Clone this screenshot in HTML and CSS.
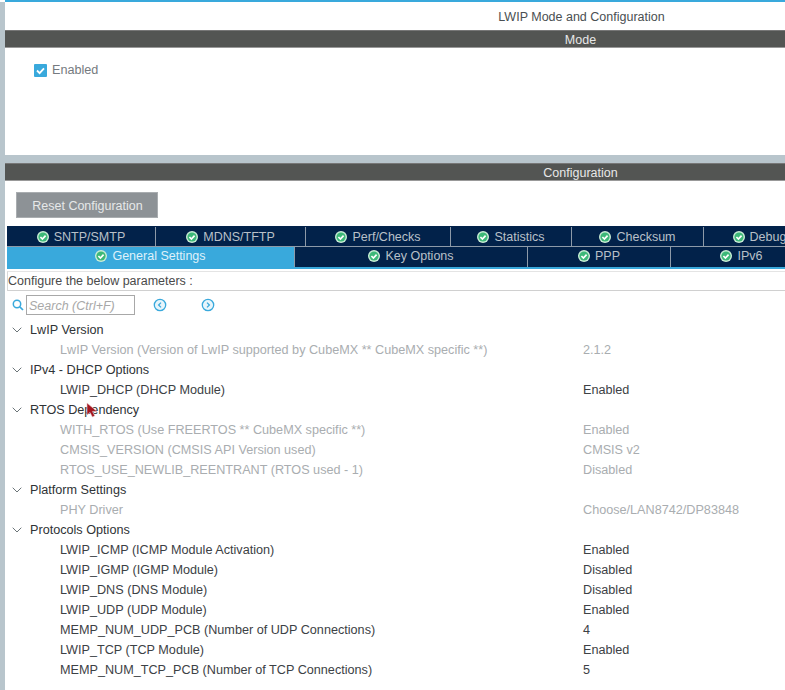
FILE: index.html
```html
<!DOCTYPE html>
<html lang="en">
<head>
<meta charset="utf-8">
<title>LWIP Mode and Configuration</title>
<link rel="stylesheet" href="styles.css">
</head>
<body>
<svg class="defs" width="0" height="0" aria-hidden="true">
  <symbol id="ok" viewBox="0 0 12 12">
    <circle cx="6" cy="6" r="6" fill="#c9ecd6"/>
    <circle cx="6" cy="6" r="4.6" fill="#3cb878"/>
    <path d="M3.4 6l2 2 3.2-3.4" fill="none" stroke="#fff" stroke-width="1.7"/>
  </symbol>
  <symbol id="chev" viewBox="0 0 10 6">
    <path d="M.7.7L5 5 9.3.7" fill="none" stroke="#6b7478" stroke-width="1"/>
  </symbol>
</svg>
<div class="strip"></div>
<main class="main">
  <header class="title">LWIP Mode and Configuration</header>
  <div class="bar">Mode</div>
  <section class="mode">
    <label class="enabled">
      <svg class="check" viewBox="0 0 13 13"><rect width="13" height="13" rx="1" fill="#39a9dc"/><path d="M3 6.5l2.6 2.6L10 4.4" fill="none" stroke="#fff" stroke-width="1.8"/></svg>
      Enabled
    </label>
  </section>
  <div class="gap"></div>
  <div class="bar">Configuration</div>
  <section class="config">
    <button class="reset" type="button">Reset Configuration</button>
    <div class="tabs tabs-top">
      <div class="tab"><svg class="ok"><use href="#ok"/></svg>SNTP/SMTP</div>
      <div class="tab"><svg class="ok"><use href="#ok"/></svg>MDNS/TFTP</div>
      <div class="tab"><svg class="ok"><use href="#ok"/></svg>Perf/Checks</div>
      <div class="tab"><svg class="ok"><use href="#ok"/></svg>Statistics</div>
      <div class="tab"><svg class="ok"><use href="#ok"/></svg>Checksum</div>
      <div class="tab"><svg class="ok"><use href="#ok"/></svg>Debug</div>
    </div>
    <div class="tabs tabs-bottom">
      <div class="tab active"><svg class="ok"><use href="#ok"/></svg>General Settings</div>
      <div class="tab"><svg class="ok"><use href="#ok"/></svg>Key Options</div>
      <div class="tab"><svg class="ok"><use href="#ok"/></svg>PPP</div>
      <div class="tab"><svg class="ok"><use href="#ok"/></svg>IPv6</div>
    </div>
    <div class="configure">Configure the below parameters :</div>
    <div class="search">
      <svg class="glass" viewBox="0 0 12 12"><circle cx="5" cy="5" r="3.7" fill="none" stroke="#39a9dc" stroke-width="1.5"/><path d="M7.8 7.8L11 11" stroke="#39a9dc" stroke-width="1.7"/></svg>
      <div class="search-box">Search (Ctrl+F)</div>
      <svg class="nav nav-prev" viewBox="0 0 14 14"><circle cx="7" cy="7" r="5.7" fill="#e8f5fb" stroke="#39a9dc" stroke-width="1.3"/><path d="M8 4.6L5.6 7 8 9.4" fill="none" stroke="#39a9dc" stroke-width="1.3"/></svg>
      <svg class="nav nav-next" viewBox="0 0 14 14"><circle cx="7" cy="7" r="5.7" fill="#e8f5fb" stroke="#39a9dc" stroke-width="1.3"/><path d="M6 4.6L8.4 7 6 9.4" fill="none" stroke="#39a9dc" stroke-width="1.3"/></svg>
    </div>
    <div class="tree">
      <div class="group"><svg class="chev"><use href="#chev"/></svg>LwIP Version</div>
      <div class="row off"><span>LwIP Version (Version of LwIP supported by CubeMX ** CubeMX specific **)</span><span>2.1.2</span></div>
      <div class="group"><svg class="chev"><use href="#chev"/></svg>IPv4 - DHCP Options</div>
      <div class="row"><span>LWIP_DHCP (DHCP Module)</span><span>Enabled</span></div>
      <div class="group"><svg class="chev"><use href="#chev"/></svg>RTOS Dependency
        <svg class="cursor" viewBox="0 0 12 16"><path d="M1 1v12l3-2.6L6.4 15l2.4-1.2-2.4-4.4H11z" fill="#a4161f" stroke="#e9c9c9" stroke-width=".6"/></svg>
      </div>
      <div class="row off"><span>WITH_RTOS (Use FREERTOS ** CubeMX specific **)</span><span>Enabled</span></div>
      <div class="row off"><span>CMSIS_VERSION (CMSIS API Version used)</span><span>CMSIS v2</span></div>
      <div class="row off"><span>RTOS_USE_NEWLIB_REENTRANT (RTOS used - 1)</span><span>Disabled</span></div>
      <div class="group"><svg class="chev"><use href="#chev"/></svg>Platform Settings</div>
      <div class="row off"><span>PHY Driver</span><span>Choose/LAN8742/DP83848</span></div>
      <div class="group"><svg class="chev"><use href="#chev"/></svg>Protocols Options</div>
      <div class="row"><span>LWIP_ICMP (ICMP Module Activation)</span><span>Enabled</span></div>
      <div class="row"><span>LWIP_IGMP (IGMP Module)</span><span>Disabled</span></div>
      <div class="row"><span>LWIP_DNS (DNS Module)</span><span>Disabled</span></div>
      <div class="row"><span>LWIP_UDP (UDP Module)</span><span>Enabled</span></div>
      <div class="row"><span>MEMP_NUM_UDP_PCB (Number of UDP Connections)</span><span>4</span></div>
      <div class="row"><span>LWIP_TCP (TCP Module)</span><span>Enabled</span></div>
      <div class="row"><span>MEMP_NUM_TCP_PCB (Number of TCP Connections)</span><span>5</span></div>
    </div>
  </section>
</main>
</body>
</html>
```
FILE: styles.css
```css
html, body {
  margin: 0;
  height: 690px;
  overflow: hidden;
}
body {
  display: flex;
  width: 785px;
  background: #fff;
  font: 12.5px/20px "Liberation Sans", Arial, sans-serif;
  color: #3c4145;
}
.defs { position: absolute; }
.strip {
  flex: 0 0 5px;
  background: #b8c5cc;
  margin-top: 2px;
}
.main {
  flex: 0 0 1151px;
  border-top: 2px solid #39a9dc;
}
.title {
  height: 28px;
  line-height: 30px;
  padding-left: 2px;
  text-align: center;
  color: #4a4f52;
}
.bar {
  height: 16px;
  line-height: 18px;
  background: #535553;
  border-top: 1px solid #777;
  border-bottom: 1px solid #999;
  text-align: center;
  color: #e8e8e8;
}
.mode {
  height: 107px;
  box-sizing: border-box;
  padding: 12px 0 0 29px;
  font-size: 12.65px;
}
.enabled {
  display: flex;
  align-items: center;
  gap: 5px;
  color: #757a80;
}
.check { width: 13px; height: 13px; }
.gap { height: 8px; background: #b8c5cc; }
.reset {
  display: block;
  margin: 11px 0 8px 11px;
  width: 142px;
  height: 26px;
  padding: 2px 0 0 1px;
  border: 1px solid #a9adb0;
  background: #8d9296;
  color: #e6e8e9;
  font: inherit;
}
.tabs {
  display: grid;
  margin-left: 2px;
  background: #02224a;
  color: #b9c0c8;
}
.tabs-top {
  grid-template-columns: 148px 150px 145px 121px 132px 112px;
  height: 19px;
  width: 808px;
  border-top: 1px solid #02224a;
}
.tabs-bottom {
  grid-template-columns: 287px 233px 143px 142px;
  height: 20px;
  width: 805px;
  border-top: 1px solid #8d9aa8;
  border-bottom: 2px solid #39a9dc;
}
.tab {
  display: flex;
  align-items: center;
  justify-content: center;
  gap: 5px;
  line-height: 18px;
  border-left: 1px solid #8d9aa8;
  box-sizing: border-box;
}
.tab:first-child { border-left: 0; }
.tabs-bottom .tab { padding-bottom: 2px; }
.tab.active { background: #39a9dc; color: #dff1fa; }
.ok { width: 12px; height: 12px; flex: none; }
.configure {
  margin: 2px 0 0 2px;
  width: 790px;
  height: 18px;
  line-height: 19px;
  border: 1px solid #d0d0d0;
  border-top-color: #e4e4e4;
  border-left-color: #d8d8d8;
  color: #4a4a4a;
}
.search {
  display: flex;
  align-items: center;
  height: 20px;
  margin-top: 4px;
  padding-left: 7px;
}
.glass { width: 12px; height: 12px; margin-right: 2px; }
.search-box {
  width: 109px;
  height: 20px;
  line-height: 20px;
  box-sizing: border-box;
  border: 1px solid #a8a8a8;
  padding-left: 2px;
  color: #a8a8a8;
  font-style: italic;
}
.nav { width: 14px; height: 14px; }
.nav-prev { margin-left: 18px; }
.nav-next { margin-left: 34px; }
.tree {
  margin-top: 5px;
  font-size: 12.65px;
}
.group {
  position: relative;
  display: flex;
  align-items: center;
  height: 20px;
  padding-left: 7px;
  color: #2f3336;
}
.chev { width: 10px; height: 6px; margin-right: 8px; }
.row {
  display: flex;
  height: 20px;
  padding-left: 55px;
  color: #3c4145;
}
.row span:first-child { flex: 0 0 523px; }
.row.off { color: #a9adb0; }
.cursor {
  position: absolute;
  left: 81px;
  top: 2px;
  width: 12px;
  height: 16px;
}
```
